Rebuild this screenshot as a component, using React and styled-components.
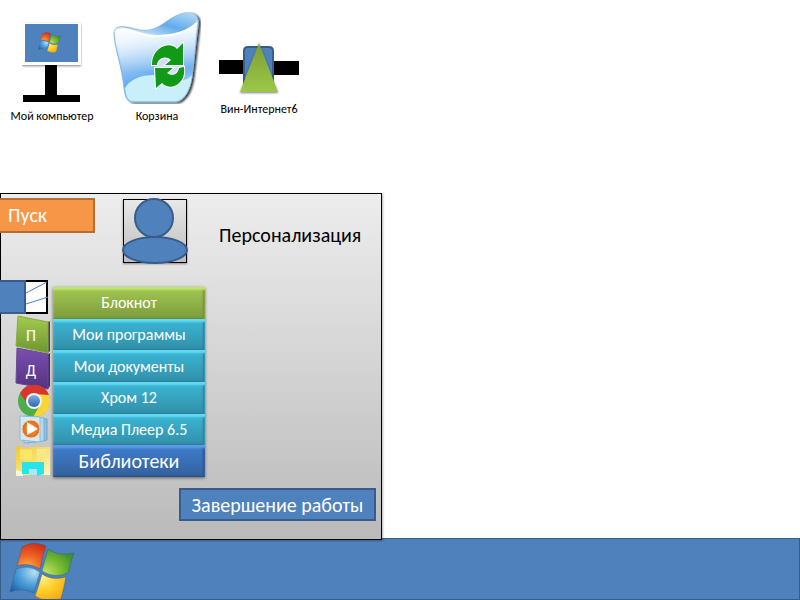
import * as React from "react";
import styled, { createGlobalStyle } from "styled-components";

const menuItems = [
  { text: "Блокнот", tone: "green" },
  { text: "Мои программы", tone: "teal" },
  { text: "Мои документы", tone: "teal" },
  { text: "Хром 12", tone: "teal" },
  { text: "Медиа Плеер 6.5", tone: "teal" },
  { text: "Библиотеки", tone: "blue", large: true },
];

const tones = {
  green: { top: "#a3c853", bottom: "#7d9b3c", light: "#bfe566", dark: "#6f8a36" },
  teal: { top: "#3bb8d8", bottom: "#328fa9", light: "#5fdcf3", dark: "#2a7a90" },
  blue: { top: "#3f7fd0", bottom: "#33609b", light: "#5f9ae6", dark: "#2b4f80" },
};

// icons
const WindowsFlag = ({ size, id }) => (
  <svg width={size} height={size} viewBox="0 0 66 60" aria-hidden="true">
    <defs>
      <radialGradient id={`${id}-r`} cx="0.35" cy="0.95" r="1">
        <stop offset="0" stopColor="#ffb13d" />
        <stop offset="0.5" stopColor="#ee6127" />
        <stop offset="1" stopColor="#cf2e12" />
      </radialGradient>
      <radialGradient id={`${id}-g`} cx="0.1" cy="0.9" r="1">
        <stop offset="0" stopColor="#c3e467" />
        <stop offset="0.5" stopColor="#7bbd35" />
        <stop offset="1" stopColor="#3f9226" />
      </radialGradient>
      <radialGradient id={`${id}-b`} cx="0.8" cy="0.2" r="1">
        <stop offset="0" stopColor="#b3e0f5" />
        <stop offset="0.5" stopColor="#4f9fd8" />
        <stop offset="1" stopColor="#1c64ab" />
      </radialGradient>
      <radialGradient id={`${id}-y`} cx="0.2" cy="0.1" r="1">
        <stop offset="0" stopColor="#fff28a" />
        <stop offset="0.5" stopColor="#ffd02c" />
        <stop offset="1" stopColor="#f2a912" />
      </radialGradient>
    </defs>
    <g stroke="#2f4d72" strokeOpacity="0.45" strokeWidth="0.8">
      <path d="M13 5Q24-2 37 4Q33 15 31 27Q19 20 8 24Q11 14 13 5Z" fill={`url(#${id}-r)`} />
      <path d="M39 7Q50 15 65 11Q61 21 59 31Q46 37 33 29Q36 18 39 7Z" fill={`url(#${id}-g)`} />
      <path d="M7 27Q19 22 31 30Q28 40 25 51Q13 45 1 50Q4 38 7 27Z" fill={`url(#${id}-b)`} />
      <path d="M33 32Q43 39 57 35Q55 46 52 57Q38 62 26 54Q30 43 33 32Z" fill={`url(#${id}-y)`} />
    </g>
  </svg>
);

const ComputerIcon = () => (
  <svg width="60" height="92" aria-hidden="true">
    <defs>
      <filter id="frame-shadow" x="-20%" y="-20%" width="140%" height="150%">
        <feDropShadow dx="0" dy="1" stdDeviation="1" floodOpacity="0.5" />
      </filter>
    </defs>
    <rect x="0" y="11" width="59" height="42" fill="#fff" filter="url(#frame-shadow)" />
    <rect x="3" y="12" width="53" height="38" fill="#4f81bd" />
    <g transform="translate(16 19)">
      <WindowsFlag size={23} id="mini" />
    </g>
    <rect x="23" y="53" width="12" height="31" />
    <rect x="1" y="83" width="57" height="7" />
  </svg>
);

const BinIcon = () => (
  <svg width="88" height="92" aria-hidden="true">
    <defs>
      <linearGradient id="bin-front" x1="0" y1="0" x2="0.3" y2="1">
        <stop offset="0.05" stopColor="#ffffff" />
        <stop offset="0.35" stopColor="#cfe5fa" />
        <stop offset="0.8" stopColor="#64aaf0" />
        <stop offset="1" stopColor="#a7d8f6" />
      </linearGradient>
      <linearGradient id="bin-in" x1="0" y1="1" x2="1" y2="0">
        <stop offset="0" stopColor="#e3f1fd" />
        <stop offset="0.5" stopColor="#63abeb" />
        <stop offset="1" stopColor="#b5dcf8" />
      </linearGradient>
      <linearGradient id="bin-shine" x1="0" y1="0" x2="0" y2="1">
        <stop offset="0" stopColor="#fff" stopOpacity="0.95" />
        <stop offset="1" stopColor="#fff" stopOpacity="0" />
      </linearGradient>
      <filter id="bin-shadow" x="-10%" y="-10%" width="125%" height="125%">
        <feDropShadow dx="2" dy="1" stdDeviation="1" floodOpacity="0.8" />
      </filter>
    </defs>
    <path
      d="M1 22C1 14 8 14 16 16C30 20 38 20 50 12C60 5 68 0 77 1C84 2 86 7 85 14C82 36 81 50 79 64C77 80 70 90 62 90H20C14 90 12 84 11 76C9 54 2 38 1 22Z"
      fill="url(#bin-front)"
      stroke="#86b7e2"
      filter="url(#bin-shadow)"
    />
    <path d="M2 21C12 13 26 25 44 24C60 24 74 20 84 11C82 36 81 50 79 60H10C7 44 3 34 2 21Z" fill="url(#bin-shine)" />
    <path d="M16 16C30 20 38 20 50 12C60 5 68 0 77 1C84 2 86 7 82 11C72 21 58 23 44 23C32 22 24 19 16 16Z" fill="url(#bin-in)" />
    <path d="M2 20C12 12 26 25 44 24C60 24 74 20 84 11" fill="none" stroke="#fff" strokeWidth="2" />
    <path d="M12 76C20 62 44 60 58 67C68 71 76 67 79 63C77 80 70 89 62 89H20C15 89 13 84 12 76Z" fill="#c9f0fa" />
    <path d="M44 53Q47 46 53 45L58 49L53 54H70L66 56Q64 63 60 63L54 61L59 56H43Z" fill="#d3dcfa" />
    <g fill="#109a18" stroke="#fff" strokeWidth="2" paintOrder="stroke">
      <path d="M39 53C39 46 41 41 46 37C52 32 60 32 64 37L70 31V53H52L58 48C52 43 45 46 44 53Z" />
      <path d="M42 56H60L54 61C60 65 65 62 66 56L71 55C72 62 70 68 66 71C61 76 54 76 49 71L43 76Z" />
    </g>
  </svg>
);

const InternetIcon = () => (
  <svg width="80" height="85" aria-hidden="true">
    <defs>
      <linearGradient id="tri" x1="0" y1="0" x2="0" y2="1">
        <stop offset="0" stopColor="#7c9e35" />
        <stop offset="1" stopColor="#9bc848" />
      </linearGradient>
      <filter id="tri-shadow" x="-20%" y="-10%" width="140%" height="130%">
        <feDropShadow dx="0" dy="1" stdDeviation="1" floodOpacity="0.5" />
      </filter>
    </defs>
    <rect x="0" y="48" width="26" height="14" />
    <rect x="53" y="49" width="27" height="14" />
    <path d="M25 78V39Q25 35 29 35H50Q54 35 54 39V78Z" fill="#4f81bd" stroke="#385d8a" strokeWidth="2" />
    <path d="M40 31L59 80H21Z" fill="url(#tri)" filter="url(#tri-shadow)" />
  </svg>
);

const UserIcon = () => (
  <svg width="64" height="66" overflow="visible" aria-hidden="true">
    <defs>
      <linearGradient id="user-bg" x1="0" y1="0" x2="0" y2="1">
        <stop offset="0" stopColor="#e8e8e8" />
        <stop offset="1" stopColor="#bdbdbd" />
      </linearGradient>
      <filter id="user-shadow" x="-10%" y="-10%" width="120%" height="125%">
        <feDropShadow dx="0" dy="1" stdDeviation="1" floodOpacity="0.4" />
      </filter>
    </defs>
    <rect x="0.5" y="1.5" width="63" height="63" fill="url(#user-bg)" stroke="#000" filter="url(#user-shadow)" />
    <g fill="#4f81bd" stroke="#385d8a" strokeWidth="2">
      <circle cx="31" cy="20" r="19" />
      <ellipse cx="32" cy="52" rx="32" ry="13" />
    </g>
  </svg>
);

const NotepadIcon = () => (
  <svg width="48" height="34" aria-hidden="true">
    <rect x="1" y="1" width="46" height="32" fill="#fff" stroke="#000" strokeWidth="2" />
    <path d="M26 13L47 2M26 24L48 17" stroke="#4a7ebb" />
    <rect x="-1" y="1" width="26" height="32" fill="#4f81bd" stroke="#385d8a" strokeWidth="2" />
  </svg>
);

const ProgramsIcon = () => (
  <svg width="50" height="35" overflow="visible" aria-hidden="true">
    <defs>
      <linearGradient id="prog" x1="0" y1="0" x2="0" y2="1">
        <stop offset="0" stopColor="#a2cc4d" />
        <stop offset="1" stopColor="#6f9433" />
      </linearGradient>
    </defs>
    <path d="M48 8L50 7V37L48 39Z" fill="#4d4458" />
    <path d="M18 2L48 8V39L16 32Z" fill="url(#prog)" stroke="#86ac3e" />
    <TileLetter x="31" y="27" textAnchor="middle">П</TileLetter>
  </svg>
);

const DocumentsIcon = () => (
  <svg width="50" height="36" overflow="visible" aria-hidden="true">
    <defs>
      <linearGradient id="docs" x1="0" y1="0" x2="0" y2="1">
        <stop offset="0" stopColor="#7a4fb0" />
        <stop offset="1" stopColor="#553380" />
      </linearGradient>
    </defs>
    <path d="M48 5L50 4V37L48 40Z" fill="#443456" />
    <path d="M17-1L48 5V40L16 34Z" fill="url(#docs)" stroke="#6a479a" />
    <TileLetter x="31" y="27" textAnchor="middle">Д</TileLetter>
  </svg>
);

const ChromeIcon = () => (
  <svg width="50" height="31" overflow="visible" aria-hidden="true">
    <defs>
      <linearGradient id="core" x1="0" y1="0" x2="0" y2="1">
        <stop offset="0" stopColor="#7fb0e2" />
        <stop offset="1" stopColor="#2b68ad" />
      </linearGradient>
    </defs>
    <g transform="translate(34 16)">
      <circle r="16" fill="#4cae4a" />
      <path d="M-14-8A16 16 0 0 1 15-6H0A7 7 0 0 0-6 4Z" fill="#d8382c" />
      <path d="M15-6A16 16 0 0 1-1 16L6 4A7 7 0 0 0 0-7Z" fill="#fbd534" />
      <circle r="8" fill="#f3f3f3" />
      <circle r="6" fill="url(#core)" />
    </g>
  </svg>
);

const PlayerIcon = () => (
  <svg width="50" height="29" overflow="visible" aria-hidden="true">
    <defs>
      <radialGradient id="play">
        <stop offset="0" stopColor="#f7a64a" />
        <stop offset="1" stopColor="#e4641a" />
      </radialGradient>
    </defs>
    <path d="M27 1L47 3V24L27 27Z" fill="#8ebede" stroke="#6da3c9" />
    <path d="M24 0L44 2V25L24 27Z" fill="#b5d8ee" stroke="#7fb0d2" />
    <path d="M20 0L40 1V26L20 24Z" fill="#d3e9f6" stroke="#8dbbd8" />
    <circle cx="31" cy="13" r="9" fill="url(#play)" stroke="#f6d0ae" />
    <path d="M27 6L38 13L27 19Z" fill="#fff" />
  </svg>
);

const LibraryIcon = () => (
  <svg width="50" height="32" overflow="visible" aria-hidden="true">
    <defs>
      <linearGradient id="lib" x1="0" y1="0" x2="1" y2="1">
        <stop offset="0" stopColor="#f2c836" />
        <stop offset="0.6" stopColor="#fae57a" />
        <stop offset="1" stopColor="#fdf6c8" />
      </linearGradient>
    </defs>
    <path d="M16 1L27 3L34 2L50 2V30H16Z" fill="url(#lib)" />
    <path d="M20 4L32 5V16L20 14Z" fill="#fbe668" />
    <path d="M37 4H47V14L37 15Z" fill="#fae887" />
    <path d="M16 25L23 27V31H16Z" fill="#fdf8d8" />
    <path d="M22 29V17H44V29L37 31V24H29V29Z" fill="#27e3ea" />
    <path d="M29 24H37V30H29Z" fill="#a9e9f4" />
  </svg>
);

const App = () => (
  <>
    <GlobalStyle />
    <Desktop>
      <Shortcuts>
        <Shortcut href="#computer" $width={86}>
          <ComputerIcon />
          <span>Мой компьютер</span>
        </Shortcut>
        <Shortcut href="#bin" $width={88}>
          <BinIcon />
          <span>Корзина</span>
        </Shortcut>
        <Shortcut href="#internet" $width={80}>
          <InternetIcon />
          <span>Вин-Интернет6</span>
        </Shortcut>
      </Shortcuts>
      <StartMenu>
        <MenuHeader>
          <MenuTitle>Пуск</MenuTitle>
          <UserIcon />
          <Personalize href="#personalize">Персонализация</Personalize>
        </MenuHeader>
        <MenuBody>
          <IconColumn>
            <NotepadIcon />
            <ProgramsIcon />
            <DocumentsIcon />
            <ChromeIcon />
            <PlayerIcon />
            <LibraryIcon />
          </IconColumn>
          <MenuList>
            {menuItems.map((item) => (
              <MenuButton key={item.text} type="button" $tone={tones[item.tone]} $large={item.large}>
                {item.text}
              </MenuButton>
            ))}
          </MenuList>
        </MenuBody>
        <ShutdownButton type="button">Завершение работы</ShutdownButton>
      </StartMenu>
      <Taskbar>
        <StartButton type="button" aria-label="Пуск">
          <WindowsFlag size={66} id="start" />
        </StartButton>
      </Taskbar>
    </Desktop>
  </>
);

export default App;

const GlobalStyle = createGlobalStyle`
  * {
    box-sizing: border-box;
  }

  body {
    margin: 0;
    background: #fff;
    color: #000;
    font-family: Carlito, Lato, "Open Sans", sans-serif;
  }

  button {
    font-family: inherit;
    cursor: pointer;
  }

  svg {
    display: block;
    flex-shrink: 0;
  }
`;

const Desktop = styled.main`
  display: flex;
  flex-direction: column;
  min-height: 100vh;
`;

const Shortcuts = styled.nav`
  display: flex;
  flex: 1;
  align-items: flex-start;
  gap: 18px;
  padding: 12px 9px;
`;

const Shortcut = styled.a`
  display: flex;
  flex-direction: column;
  align-items: center;
  gap: 4px;
  width: ${({ $width }) => $width}px;
  color: #000;
  font-size: 12px;
  line-height: 16px;
  text-decoration: none;
  white-space: nowrap;
`;

const StartMenu = styled.section`
  position: relative;
  z-index: 1;
  display: flex;
  flex-direction: column;
  width: 382px;
  padding: 5px 6px 19px 0;
  background: linear-gradient(#ededed, #bababa);
  box-shadow: inset 0 0 0 1px #000, 1px 1px 2px rgba(0, 0, 0, 0.3);
`;

const MenuHeader = styled.header`
  display: flex;
  align-items: flex-start;
`;

const MenuTitle = styled.h1`
  width: 95px;
  margin: 0 28px 0 0;
  padding: 0 8px;
  border: 2px solid #b66d31;
  border-left: 0;
  background: #f79646;
  color: #fff;
  font-size: 20px;
  font-weight: 400;
  line-height: 31px;
`;

const Personalize = styled.a`
  align-self: center;
  margin-left: 32px;
  padding-top: 8px;
  color: #000;
  font-size: 20px;
  line-height: 24px;
  text-decoration: none;
`;

const MenuBody = styled.div`
  display: flex;
  align-items: flex-end;
  gap: 3px;
  margin-top: 16px;
`;

const IconColumn = styled.div`
  display: flex;
  flex-direction: column;
  width: 50px;
`;

const TileLetter = styled.text`
  fill: #fff;
  font-size: 16px;
`;

const MenuList = styled.div`
  display: grid;
  grid-auto-rows: 1fr;
  width: 152px;
  height: 190px;
  box-shadow: 0 1px 3px rgba(0, 0, 0, 0.5);
`;

const MenuButton = styled.button`
  padding: 0;
  border: 0;
  background: linear-gradient(${({ $tone }) => $tone.top}, ${({ $tone }) => $tone.bottom});
  box-shadow: inset 0 3px 2px ${({ $tone }) => $tone.light}, inset -2px -1px 2px ${({ $tone }) => $tone.dark};
  color: #fff;
  font-size: ${({ $large }) => ($large ? 20 : 16)}px;
`;

const ShutdownButton = styled.button`
  align-self: flex-end;
  width: 197px;
  height: 33px;
  margin-top: 11px;
  padding: 0;
  border: 2px solid #385d8a;
  background: #4f81bd;
  color: #fff;
  font-size: 20px;
`;

const Taskbar = styled.footer`
  height: 62px;
  margin-top: -2px;
  padding: 0 8px;
  border: 1px solid #385d8a;
  background: #4f81bd;
  overflow: hidden;
`;

const StartButton = styled.button`
  display: block;
  padding: 0;
  border: 0;
  background: none;
`;
